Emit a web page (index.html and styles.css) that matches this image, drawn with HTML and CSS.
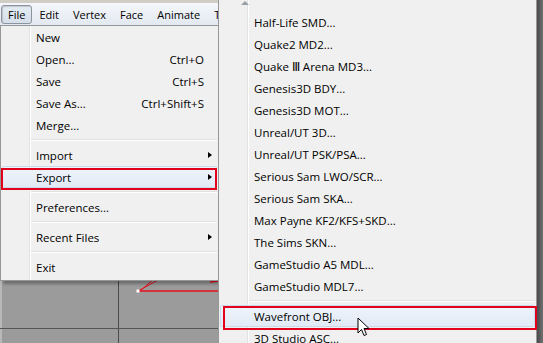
FILE: index.html
```html
<!DOCTYPE html>
<html lang="en">
<head>
    <meta charset="UTF-8">
    <title>Export Menu</title>
    <link rel="stylesheet" href="styles.css">
</head>
<body>
    <div class="app">
        <div class="menubar">
            <span class="menubar-item active">File</span>
            <span class="menubar-item">Edit</span>
            <span class="menubar-item">Vertex</span>
            <span class="menubar-item">Face</span>
            <span class="menubar-item">Animate</span>
            <span class="menubar-item">Tools</span>
        </div>
        <div class="viewport">
            <svg class="grid" width="537" height="318">
                <line x1="1" y1="0" x2="1" y2="318" stroke="#b8b8b8" stroke-width="2"/>
                <line x1="118.5" y1="0" x2="118.5" y2="318" stroke="#4a4a4a"/>
                <line x1="0" y1="303.5" x2="537" y2="303.5" stroke="#555"/>
                <line x1="138" y1="266" x2="219" y2="266" stroke="#e8101c" stroke-width="1.5"/>
                <line x1="138" y1="266" x2="160" y2="254" stroke="#e8101c"/>
                <line x1="140" y1="266" x2="154" y2="254" stroke="#e8101c"/>
                <line x1="210" y1="257" x2="219" y2="256" stroke="#e8101c" stroke-width="1.5"/>
                <rect x="136.5" y="264.5" width="3" height="3" fill="#fff"/>
            </svg>
        </div>

        <div class="menu file-menu">
            <div class="menu-item"><span class="label">New</span></div>
            <div class="menu-item"><span class="label">Open...</span><span class="shortcut">Ctrl+O</span></div>
            <div class="menu-item"><span class="label">Save</span><span class="shortcut">Ctrl+S</span></div>
            <div class="menu-item"><span class="label">Save As...</span><span class="shortcut">Ctrl+Shift+S</span></div>
            <div class="menu-item"><span class="label">Merge...</span></div>
            <div class="separator"></div>
            <div class="menu-item"><span class="label">Import</span><span class="arrow"></span></div>
            <div class="menu-item hot marked"><span class="label">Export</span><span class="arrow"></span></div>
            <div class="separator"></div>
            <div class="menu-item"><span class="label">Preferences...</span></div>
            <div class="separator"></div>
            <div class="menu-item"><span class="label">Recent Files</span><span class="arrow"></span></div>
            <div class="separator"></div>
            <div class="menu-item"><span class="label">Exit</span></div>
        </div>

        <div class="menu sub-menu">
            <div class="scroll-up"><span class="up-arrow"></span></div>
            <div class="menu-item"><span class="label">Half-Life SMD...</span></div>
            <div class="menu-item"><span class="label">Quake2 MD2...</span></div>
            <div class="menu-item"><span class="label">Quake Ⅲ Arena MD3...</span></div>
            <div class="menu-item"><span class="label">Genesis3D BDY...</span></div>
            <div class="menu-item"><span class="label">Genesis3D MOT...</span></div>
            <div class="menu-item"><span class="label">Unreal/UT 3D...</span></div>
            <div class="menu-item"><span class="label">Unreal/UT PSK/PSA...</span></div>
            <div class="menu-item"><span class="label">Serious Sam LWO/SCR...</span></div>
            <div class="menu-item"><span class="label">Serious Sam SKA...</span></div>
            <div class="menu-item"><span class="label">Max Payne KF2/KFS+SKD...</span></div>
            <div class="menu-item"><span class="label">The Sims SKN...</span></div>
            <div class="menu-item"><span class="label">GameStudio A5 MDL...</span></div>
            <div class="menu-item"><span class="label">GameStudio MDL7...</span></div>
            <div class="separator"></div>
            <div class="menu-item hot marked-wide"><span class="label">Wavefront OBJ...</span></div>
            <div class="menu-item"><span class="label">3D Studio ASC...</span></div>
        </div>

        <svg class="cursor" width="14" height="22" viewBox="0 0 14 22">
            <path d="M1 1 L1 16 L4.5 12.5 L7 18.5 L9.5 17.5 L7 11.5 L12 11.5 Z" fill="#fff" stroke="#000" stroke-width="1" stroke-linejoin="round"/>
        </svg>
    </div>
</body>
</html>
```

FILE: styles.css
```css
body {
    margin: 0;
    background-color: #888;
}
.app {
    position: relative;
    width: 543px;
    height: 343px;
    overflow: hidden;
    box-sizing: border-box;
    padding-right: 6px;
    display: flex;
    flex-direction: column;
    background: linear-gradient(to right, #8a8a8a, #6e6e6e);
    font-family: "Open Sans", "Noto Sans", sans-serif;
    font-size: 11.5px;
    color: #000;
}
.menubar {
    height: 25px;
    box-sizing: border-box;
    border-top: 3px solid #cfcdc4;
    background: linear-gradient(#f5f7fb, #e3e9f1);
    display: flex;
    align-items: center;
    padding-left: 1px;
    font-size: 11px;
}
.menubar-item {
    height: 17px;
    line-height: 17px;
    padding: 0 6px;
    border: 1px solid transparent;
    border-radius: 3px;
}
.menubar-item.active {
    border-color: #8d949e;
    background: linear-gradient(#e4ebf3, #d5dfea);
    box-shadow: inset 1px 1px 1px rgba(0, 0, 0, 0.15);
}
.viewport {
    flex: 1;
    background-color: #9b9b9b;
}
.grid {
    display: block;
}

/* popup menus */
.menu {
    position: absolute;
    box-sizing: border-box;
    background-color: #f0f0f0;
    border: 1px solid #979797;
    box-shadow: 3px 3px 3px rgba(0, 0, 0, 0.3);
    background-image: linear-gradient(to right, transparent 28px, #e2e3e3 28px, #e2e3e3 29px, #fff 29px, #fff 30px, transparent 30px);
}
.file-menu {
    left: 0;
    top: 25px;
    width: 219px;
    padding-bottom: 2px;
}
.sub-menu {
    left: 218px;
    top: -6px;
    width: 319px;
    height: 360px;
}
.menu-item {
    position: relative;
    height: 22px;
    display: flex;
    align-items: center;
    padding: 0 5px 0 34px;
    margin: 0 1px;
    white-space: nowrap;
}
.menu-item .label {
    flex: 1;
}
.shortcut {
    margin-right: 8px;
}
.arrow {
    width: 0;
    height: 0;
    border-top: 3.5px solid transparent;
    border-bottom: 3.5px solid transparent;
    border-left: 4px solid #000;
}
.menu-item.hot {
    background: linear-gradient(#f0f5fb, #e0e9f5);
    box-shadow: inset 0 0 0 1px #c9daee;
    border-radius: 2px;
}
.marked::after,
.marked-wide::after {
    content: "";
    position: absolute;
    border: 2px solid #e2001a;
}
.marked::after {
    top: 2px;
    bottom: -2px;
    left: -1px;
    right: 0;
}
.marked-wide::after {
    top: 1px;
    bottom: -3px;
    left: 3px;
    right: -2px;
}
.separator {
    height: 1px;
    margin: 3px 1px 3px 30px;
    background-color: #e0e0e0;
    border-bottom: 1px solid #fff;
}
.scroll-up {
    height: 16px;
    position: relative;
}
.up-arrow {
    position: absolute;
    left: 22px;
    top: 6px;
    width: 0;
    height: 0;
    border-left: 4px solid transparent;
    border-right: 4px solid transparent;
    border-bottom: 4px solid #9aa0a8;
}
.cursor {
    position: absolute;
    left: 357px;
    top: 317px;
}
```
